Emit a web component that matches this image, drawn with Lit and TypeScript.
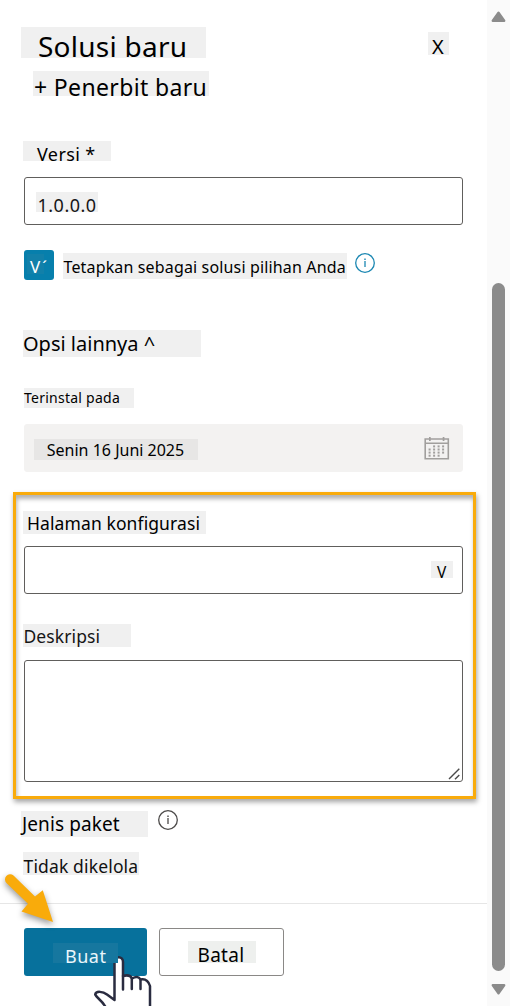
import { LitElement, html, css, svg } from "lit";
import { customElement, property } from "lit/decorators.js";

@customElement("info-icon")
class InfoIcon extends LitElement {
  static styles = css`
    :host { display: block; width: 20px; height: 20px; }
    svg { display: block; }
  `;
  render() {
    return html`<svg width="20" height="20" viewBox="0 0 20 20" fill="none" stroke="currentColor">
      <circle cx="10" cy="10" r="9.3" stroke-width="1.3" />
      <path d="M10 8v6" stroke-width="1.3" />
      <path d="M10 5.4v1.5" stroke-width="1.4" />
    </svg>`;
  }
}

@customElement("text-tag")
class TextTag extends LitElement {
  @property() text = "";
  static styles = css`
    :host { display: block; box-sizing: border-box; background: #f0f0f0; white-space: pre; flex: none; }
  `;
  render() {
    return html`${this.text}`;
  }
}

@customElement("app-root")
class AppRoot extends LitElement {
  static styles = css`
    :host {
      display: grid;
      grid-template-columns: 487px 23px;
      position: relative;
      width: 510px;
      height: 1006px;
      overflow: hidden;
      background: #fff;
      color: #000;
      font-family: "Noto Sans", sans-serif;
    }
    svg { display: block; }
    .panel { display: flex; flex-direction: column; align-items: flex-start; min-width: 0; }
    .head { display: flex; align-items: flex-start; padding: 27px 0 0 21px; height: 31px; }
    .title { width: 185px; height: 31px; padding-left: 17px; font-size: 28px; line-height: 38px; letter-spacing: 0.25px; }
    .close { width: 21px; height: 23px; margin: 5px 0 0 222px; padding-left: 4px; font-size: 20px; line-height: 30px; }
    .publisher { width: 176px; height: 25px; margin: 13px 0 0 33px; padding-left: 1px; font-size: 23px; line-height: 32px; letter-spacing: 0.35px; }
    .version { width: 88px; height: 20px; margin: 45px 0 0 23px; padding-left: 14px; font-size: 18px; line-height: 27px; letter-spacing: 0.4px; }
    .field {
      box-sizing: border-box;
      display: flex;
      width: 439px;
      height: 48px;
      border: 1px solid #605e5c;
      border-radius: 3px;
      background: #fff;
    }
    .version-field { margin: 16px 0 0 24px; padding: 14px 0 0 11px; }
    .number { width: 62px; height: 20px; padding-left: 1.5px; font-size: 18px; line-height: 26px; letter-spacing: 0.5px; color: #161616; }
    .preferred { display: flex; align-items: flex-start; margin: 25px 0 0 24px; height: 30px; }
    .check { width: 30px; height: 30px; border-radius: 3px; background: #077fac; }
    .tick { width: 17px; height: 20px; margin: 4px 0 0 3px; padding-left: 3px; background: #1280a9; color: #fff; font-size: 17px; line-height: 26px; letter-spacing: 2px; }
    .preferred-text { width: 284px; height: 26px; margin: 3px 0 0 9px; padding-left: 0.5px; font-size: 16px; line-height: 28px; letter-spacing: 0.15px; }
    .info-blue { margin: 3px 0 0 8px; color: #1b87b2; }
    .options { width: 178px; height: 27px; margin: 50px 0 0 23px; font-size: 20px; line-height: 28px; }
    .installed { width: 110px; height: 20px; margin: 31px 0 0 24px; font-size: 14px; line-height: 20px; letter-spacing: 0.25px; }
    .date { border-color: #f3f2f1; background: #f3f2f1; margin: 16px 0 0 24px; padding: 14px 0 0 9px; }
    .date-text { width: 164px; height: 21px; padding-left: 12.8px; background: #e7e6e5; font-size: 16px; line-height: 23px; }
    .calendar { margin: -3px 0 0 226px; }
    .frame {
      box-sizing: border-box;
      width: 463px;
      height: 307px;
      margin: 20px 0 0 13px;
      padding: 16px 0 0 7px;
      border: 3px solid #f9ab0b;
      box-shadow: 1px 3px 5px rgba(0, 0, 0, 0.36), inset 1px 4px 4px rgba(0, 0, 0, 0.3);
    }
    .config { width: 183px; height: 23px; padding-left: 4px; font-size: 17.5px; line-height: 24px; letter-spacing: 0.1px; }
    .select { margin: 12px 0 0 1px; padding: 14px 0 0 406px; }
    .caret { width: 22px; height: 17px; padding-left: 6px; font-size: 15.5px; line-height: 22px; }
    .description { width: 108px; height: 23px; margin-top: 30px; padding-left: 0.5px; font-size: 17.5px; line-height: 24px; letter-spacing: 0.1px; color: #161616; }
    .area { height: 122px; margin: 13px 0 0 1px; align-items: flex-end; justify-content: flex-end; }
    .package { display: flex; height: 28px; margin: 10px 0 0 21px; }
    .package-text { width: 127px; height: 26px; margin-top: 2px; padding-left: 1px; font-size: 19px; line-height: 27px; letter-spacing: 0.1px; }
    .info-grey { margin: 1px 0 0 10px; color: #4c4a49; }
    .unmanaged { width: 116px; height: 23px; margin: 15px 0 0 23px; padding-left: 0.5px; font-size: 17.5px; line-height: 28px; letter-spacing: 0.15px; color: #111; }
    .footer { box-sizing: border-box; display: flex; gap: 12px; width: 487px; height: 103px; margin-top: 28px; padding: 24px 0 0 24px; border-top: 1px solid #e6e6e6; }
    .button { box-sizing: border-box; height: 48px; border-radius: 3px; }
    .create { width: 123px; padding: 15px 0 0 29px; background: #07719c; }
    .create-text { position: relative; z-index: 2; width: 65px; height: 20px; padding-left: 12px; background: #16779f; color: #eaf6fb; font-size: 18px; line-height: 26px; letter-spacing: 0.5px; }
    .cancel { width: 125px; padding: 12px 0 0 28px; border: 1px solid #8a8886; background: #fff; }
    .cancel-text { width: 68px; height: 22px; padding-left: 9.5px; background: #eef0ee; font-size: 19px; line-height: 29px; letter-spacing: 0.3px; }
    .scroll { display: flex; flex-direction: column; align-items: center; box-sizing: border-box; padding: 11px 0; background: #fafafa; }
    .track { flex: 1; width: 13px; padding: 261px 0 13px; display: flex; }
    .thumb { flex: 1; border-radius: 7px; background: #8b8b8b; }
    .arrow { position: absolute; left: 0; top: 865px; z-index: 1; filter: drop-shadow(0 3px 3px rgba(0, 0, 0, 0.4)); }
    .hand { position: absolute; left: 88px; top: 950px; z-index: 1; }
  `;

  private calendar() {
    const dots = [0, 1, 2, 3].flatMap((row) =>
      [0, 1, 2, 3]
        .filter((col) => !(row === 0 && col === 0) && !(row === 3 && col === 3))
        .map((col) => svg`<rect x=${4.6 + col * 4.5} y=${9.4 + row * 3.1} width="2" height="2" />`)
    );
    return html`<svg class="calendar" width="26" height="24" viewBox="0 0 26 24" fill="#a19f9d">
      <path d="M.4 2.2h24.7v21.4H.4zM2 3.8v18.2h21.5V3.8z" fill-rule="evenodd" />
      <path d="M1 6.6h23.5v1.5H1zM5 1h1.7v4.1H5zM18.700 1h1.700v4.100h-1.700z" />
      ${dots}
    </svg>`;
  }

  render() {
    return html`
      <main class="panel">
        <div class="head">
          <text-tag class="title" text="Solusi baru"></text-tag>
          <text-tag class="close" text="X"></text-tag>
        </div>
        <text-tag class="publisher" text="+ Penerbit baru"></text-tag>
        <text-tag class="version" text="Versi *"></text-tag>
        <div class="field version-field"><text-tag class="number" text="1.0.0.0"></text-tag></div>
        <div class="preferred">
          <div class="check"><text-tag class="tick" text="V´"></text-tag></div>
          <text-tag class="preferred-text" text="Tetapkan sebagai solusi pilihan Anda"></text-tag>
          <info-icon class="info-blue"></info-icon>
        </div>
        <text-tag class="options" text="Opsi lainnya ^"></text-tag>
        <text-tag class="installed" text="Terinstal pada"></text-tag>
        <div class="field date">
          <text-tag class="date-text" text="Senin 16 Juni 2025"></text-tag>
          ${this.calendar()}
        </div>
        <section class="frame">
          <text-tag class="config" text="Halaman konfigurasi"></text-tag>
          <div class="field select"><text-tag class="caret" text="V"></text-tag></div>
          <text-tag class="description" text="Deskripsi"></text-tag>
          <div class="field area">
            <svg width="14" height="13" viewBox="0 0 14 13" stroke="#4a4a4a" stroke-width="1.4">
              <path d="M1 11 11.3 .8M7 11.2 11.3 7" fill="none" />
            </svg>
          </div>
        </section>
        <div class="package">
          <text-tag class="package-text" text="Jenis paket"></text-tag>
          <info-icon class="info-grey"></info-icon>
        </div>
        <text-tag class="unmanaged" text="Tidak dikelola"></text-tag>
        <div class="footer">
          <div class="button create"><text-tag class="create-text" text="Buat"></text-tag></div>
          <div class="button cancel"><text-tag class="cancel-text" text="Batal"></text-tag></div>
        </div>
      </main>
      <aside class="scroll">
        <svg width="15" height="11" viewBox="0 0 15 11"><path d="M7.5 1.8 13.2 9.7H1.8z" fill="#8b8b8b" stroke="#8b8b8b" stroke-width="2.4" stroke-linejoin="round" /></svg>
        <div class="track"><div class="thumb"></div></div>
        <svg width="15" height="11" viewBox="0 0 15 11"><path d="M7.5 9.2 13.2 1.3H1.8z" fill="#8b8b8b" stroke="#8b8b8b" stroke-width="2.4" stroke-linejoin="round" /></svg>
      </aside>
      <svg class="arrow" width="60" height="62" viewBox="0 0 60 62">
        <path d="M13.5 10.6 35 31.5 42.8 25.3 53 57 21.5 46.6 28 38.8 6.7 18.2A5 5 0 0 1 13.5 10.6z" fill="#f9ab0b" />
      </svg>
      <svg class="hand" width="68" height="56" viewBox="0 0 68 56" fill="none" stroke="#2a2c40" stroke-width="2.5" stroke-linejoin="round" stroke-linecap="round">
        <path d="M26.5 48.5V12C26.5 5.5 35 5.5 35 12V26Q42 24 44 28.5Q50 25 52.5 29.5Q59.5 28 62 36V58H18C15 51 8.5 48 7.2 44.5C8 40.5 15 41.5 19 44.500L26.500 50Z" fill="#fff" />
        <path d="M35 26V39.5M43.8 28.5V39M52.5 29.5V39" />
      </svg>
    `;
  }
}
